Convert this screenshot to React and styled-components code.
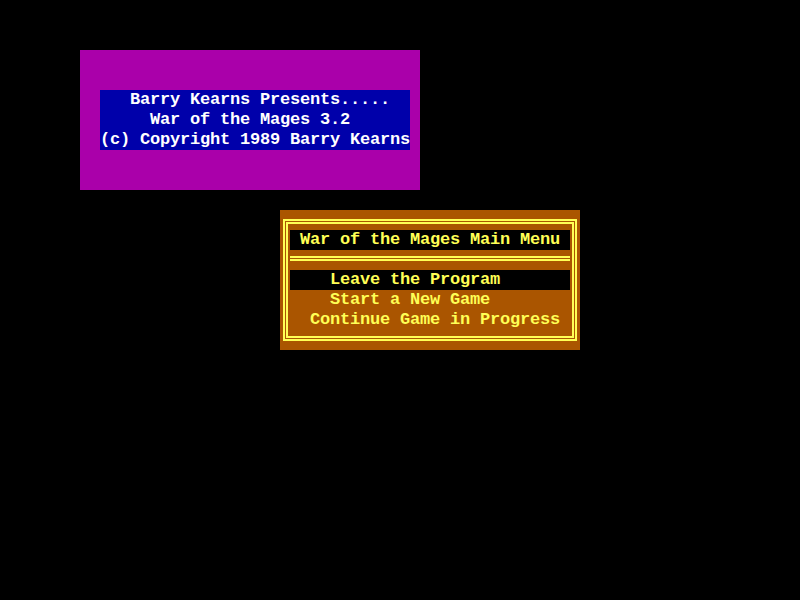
import * as React from "react";
import styled, { createGlobalStyle } from "styled-components";

const GlobalStyle = createGlobalStyle`
  html, body {
    margin: 0;
    padding: 0;
    background: #000;
  }
  body {
    width: 800px;
    height: 600px;
    overflow: hidden;
    font-family: "Liberation Mono", "DejaVu Sans Mono", monospace;
  }
`;

const Screen = styled.div`
  width: 800px;
  height: 600px;
  background: #000;
  padding: 50px 0 0 80px;
  box-sizing: border-box;
  display: flex;
  flex-direction: column;
  align-items: flex-start;
`;

const TitlePanel = styled.div`
  width: 340px;
  height: 140px;
  box-sizing: border-box;
  background: #aa00aa;
  padding: 40px 10px 40px 20px;
`;

const CreditBlock = styled.div`
  background: #0000aa;
  width: 310px;
`;

const Line = styled.div`
  height: 20px;
  line-height: 20px;
  font-size: 17px;
  font-weight: bold;
  letter-spacing: -0.2px;
  white-space: pre;
  color: ${(p) => p.$color || "#ffffff"};
  background: ${(p) => (p.$bar ? "#000" : "transparent")};
`;

// box-drawing frame: double lines sit in the middle of the edge cells
const MenuPanel = styled.div`
  margin: 20px 0 0 200px;
  width: 300px;
  height: 140px;
  box-sizing: border-box;
  background: #aa5500;
  padding: 9px 3px;
`;

const MenuFrame = styled.div`
  height: 100%;
  box-sizing: border-box;
  border: 5px double #ffff55;
  padding: 6px 2px;
  display: flex;
  flex-direction: column;
`;

const Separator = styled.div`
  height: 20px;
  box-sizing: border-box;
  padding-top: 6px;

  &::before {
    content: "";
    display: block;
    height: 5px;
    box-sizing: border-box;
    border-top: 2px solid #ffff55;
    border-bottom: 2px solid #ffff55;
  }
`;

const YELLOW = "#ffff55";

export default function App() {
  return (
    <>
      <GlobalStyle />
      <Screen>
        <TitlePanel>
          <CreditBlock>
            <Line>{"   Barry Kearns Presents....."}</Line>
            <Line>{"     War of the Mages 3.2"}</Line>
            <Line>{"(c) Copyright 1989 Barry Kearns"}</Line>
          </CreditBlock>
        </TitlePanel>
        <MenuPanel>
          <MenuFrame>
            <Line $bar $color={YELLOW}>{" War of the Mages Main Menu"}</Line>
            <Separator />
            <Line $bar $color={YELLOW}>{"    Leave the Program"}</Line>
            <Line $color={YELLOW}>{"    Start a New Game"}</Line>
            <Line $color={YELLOW}>{"  Continue Game in Progress"}</Line>
          </MenuFrame>
        </MenuPanel>
      </Screen>
    </>
  );
}
